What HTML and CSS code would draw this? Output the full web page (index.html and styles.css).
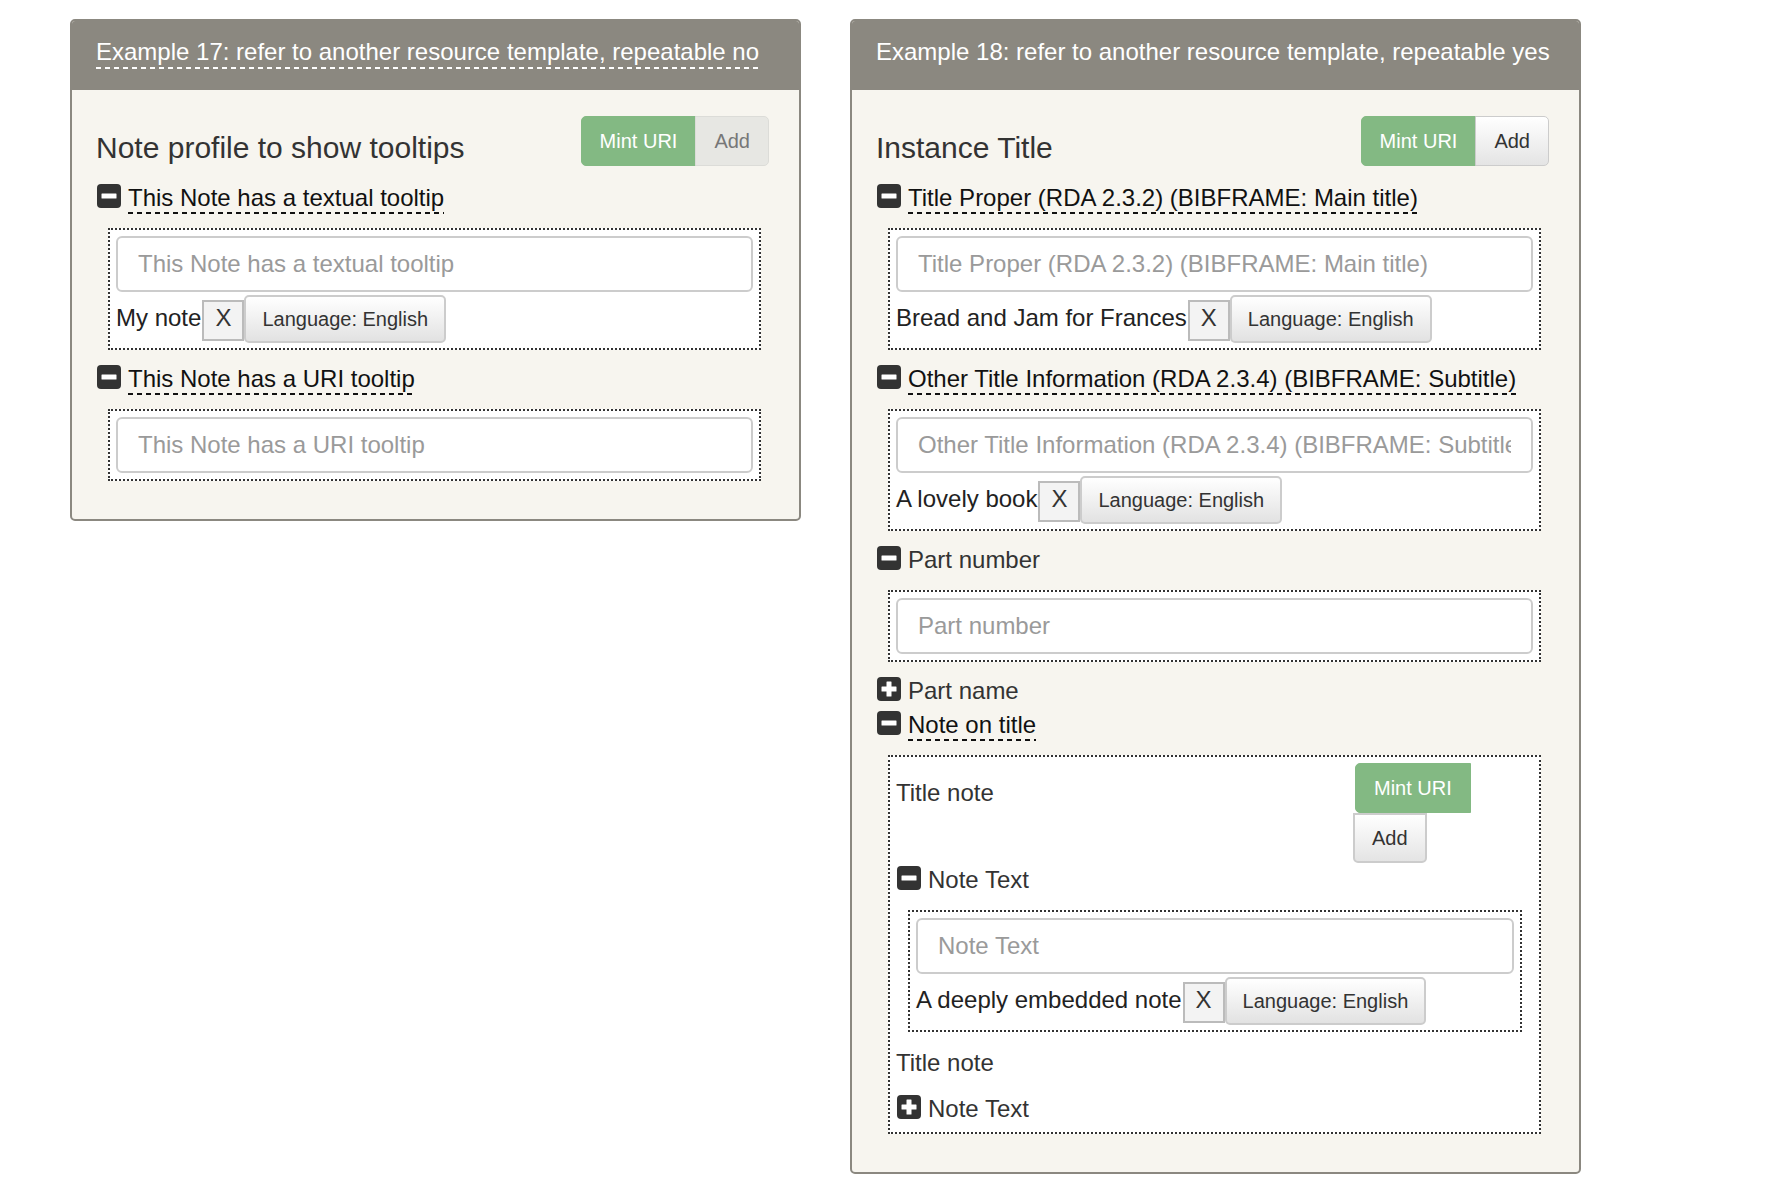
FILE: index.html
```html
<!DOCTYPE html>
<html lang="en">
<head>
<meta charset="utf-8">
<title>Resource templates</title>
<link rel="stylesheet" href="styles.css">
</head>
<body>
<div class="page">

  <section class="panel">
    <div class="panel-head"><span class="head-text tip tip-light">Example 17: refer to another resource template, repeatable no</span></div>
    <div class="panel-body">
      <div class="res-head">
        <h3 class="res-title">Note profile to show tooltips</h3>
        <div class="btn-group">
          <button type="button" class="btn btn-mint">Mint URI</button>
          <button type="button" class="btn btn-add btn-add--muted">Add</button>
        </div>
      </div>

      <div class="field">
        <div class="field-label">
          <svg class="toggle" viewBox="0 0 24 24" width="24" height="24"><rect width="24" height="24" rx="4" fill="#333"/><rect x="4.5" y="9.5" width="15" height="5" rx="0.5" fill="#fff"/></svg>
          <span class="label-text tip">This Note has a textual tooltip</span>
        </div>
        <div class="field-box">
          <input class="lit-input" type="text" placeholder="This Note has a textual tooltip">
          <div class="lit-row">
            <span class="lit-value">My note</span><button type="button" class="lit-remove">X</button><button type="button" class="lit-lang">Language: English</button>
          </div>
        </div>
      </div>

      <div class="field">
        <div class="field-label">
          <svg class="toggle" viewBox="0 0 24 24" width="24" height="24"><rect width="24" height="24" rx="4" fill="#333"/><rect x="4.5" y="9.5" width="15" height="5" rx="0.5" fill="#fff"/></svg>
          <span class="label-text tip">This Note has a URI tooltip</span>
        </div>
        <div class="field-box">
          <input class="lit-input" type="text" placeholder="This Note has a URI tooltip">
        </div>
      </div>
    </div>
  </section>

  <section class="panel">
    <div class="panel-head"><span class="head-text">Example 18: refer to another resource template, repeatable yes</span></div>
    <div class="panel-body">
      <div class="res-head">
        <h3 class="res-title">Instance Title</h3>
        <div class="btn-group">
          <button type="button" class="btn btn-mint">Mint URI</button>
          <button type="button" class="btn btn-add">Add</button>
        </div>
      </div>

      <div class="field">
        <div class="field-label">
          <svg class="toggle" viewBox="0 0 24 24" width="24" height="24"><rect width="24" height="24" rx="4" fill="#333"/><rect x="4.5" y="9.5" width="15" height="5" rx="0.5" fill="#fff"/></svg>
          <span class="label-text tip">Title Proper (RDA 2.3.2) (BIBFRAME: Main title)</span>
        </div>
        <div class="field-box">
          <input class="lit-input" type="text" placeholder="Title Proper (RDA 2.3.2) (BIBFRAME: Main title)">
          <div class="lit-row">
            <span class="lit-value">Bread and Jam for Frances</span><button type="button" class="lit-remove">X</button><button type="button" class="lit-lang">Language: English</button>
          </div>
        </div>
      </div>

      <div class="field">
        <div class="field-label">
          <svg class="toggle" viewBox="0 0 24 24" width="24" height="24"><rect width="24" height="24" rx="4" fill="#333"/><rect x="4.5" y="9.5" width="15" height="5" rx="0.5" fill="#fff"/></svg>
          <span class="label-text tip">Other Title Information (RDA 2.3.4) (BIBFRAME: Subtitle)</span>
        </div>
        <div class="field-box">
          <input class="lit-input" type="text" placeholder="Other Title Information (RDA 2.3.4) (BIBFRAME: Subtitle)">
          <div class="lit-row">
            <span class="lit-value">A lovely book</span><button type="button" class="lit-remove">X</button><button type="button" class="lit-lang">Language: English</button>
          </div>
        </div>
      </div>

      <div class="field">
        <div class="field-label">
          <svg class="toggle" viewBox="0 0 24 24" width="24" height="24"><rect width="24" height="24" rx="4" fill="#333"/><rect x="4.5" y="9.5" width="15" height="5" rx="0.5" fill="#fff"/></svg>
          <span class="label-text">Part number</span>
        </div>
        <div class="field-box">
          <input class="lit-input" type="text" placeholder="Part number">
        </div>
      </div>

      <div class="field">
        <div class="field-label">
          <svg class="toggle" viewBox="0 0 24 24" width="24" height="24"><rect width="24" height="24" rx="4" fill="#333"/><rect x="4.5" y="9.5" width="15" height="5" rx="0.5" fill="#fff"/><rect x="9.5" y="4.5" width="5" height="15" rx="0.5" fill="#fff"/></svg>
          <span class="label-text">Part name</span>
        </div>
      </div>

      <div class="field">
        <div class="field-label">
          <svg class="toggle" viewBox="0 0 24 24" width="24" height="24"><rect width="24" height="24" rx="4" fill="#333"/><rect x="4.5" y="9.5" width="15" height="5" rx="0.5" fill="#fff"/></svg>
          <span class="label-text tip">Note on title</span>
        </div>
        <div class="field-box field-box--nested">
          <div class="sub-res">
            <div class="sub-head">
              <span class="sub-title">Title note</span>
              <div class="btn-stack">
                <button type="button" class="btn btn-mint btn-mint--stack">Mint URI</button>
                <button type="button" class="btn btn-add btn-add--stack">Add</button>
              </div>
            </div>
            <div class="field">
              <div class="field-label">
                <svg class="toggle" viewBox="0 0 24 24" width="24" height="24"><rect width="24" height="24" rx="4" fill="#333"/><rect x="4.5" y="9.5" width="15" height="5" rx="0.5" fill="#fff"/></svg>
                <span class="label-text">Note Text</span>
              </div>
              <div class="field-box field-box--inner">
                <input class="lit-input" type="text" placeholder="Note Text">
                <div class="lit-row">
                  <span class="lit-value">A deeply embedded note</span><button type="button" class="lit-remove">X</button><button type="button" class="lit-lang">Language: English</button>
                </div>
              </div>
            </div>
          </div>
          <div class="sub-res">
            <div class="sub-head sub-head--plain">
              <span class="sub-title">Title note</span>
            </div>
            <div class="field">
              <div class="field-label">
                <svg class="toggle" viewBox="0 0 24 24" width="24" height="24"><rect width="24" height="24" rx="4" fill="#333"/><rect x="4.5" y="9.5" width="15" height="5" rx="0.5" fill="#fff"/><rect x="9.5" y="4.5" width="5" height="15" rx="0.5" fill="#fff"/></svg>
                <span class="label-text">Note Text</span>
              </div>
            </div>
          </div>
        </div>
      </div>
    </div>
  </section>

</div>
</body>
</html>
```

FILE: styles.css
```css
* {
  box-sizing: border-box;
}

html, body {
  margin: 0;
  padding: 0;
  background: #ffffff;
}

body {
  font-family: "Liberation Sans", Arial, sans-serif;
  color: #333;
}

.page {
  display: flex;
  align-items: flex-start;
  gap: 49px;
  padding: 19px 0 0 70px;
}

.panel {
  width: 731px;
  flex: none;
  border: 2px solid #8b8880;
  border-radius: 5px;
  background: #f7f5ef;
  overflow: hidden;
}

.panel-head {
  height: 69px;
  background: #8b8880;
  color: #fff;
  padding: 0 24px;
}

.head-text {
  display: inline-block;
  margin-top: 17px;
  font-size: 24px;
  line-height: 28px;
  padding-bottom: 3px;
  white-space: nowrap;
}

.tip {
  background-image: linear-gradient(to right, #111 0, #111 5px, transparent 5px);
  background-size: 9px 2px;
  background-repeat: repeat-x;
  background-position: 0 100%;
}

.tip-light {
  background-image: linear-gradient(to right, #ffffff 0, #ffffff 5px, transparent 5px);
}

.panel-body {
  padding: 26px 30px 28px 24px;
}

.res-head {
  display: flex;
  align-items: flex-end;
  justify-content: space-between;
  margin-bottom: 13px;
}

.res-title {
  margin: 0;
  font-size: 30px;
  line-height: 36px;
  font-weight: normal;
  color: #333;
}

.btn-group {
  display: flex;
}

.btn {
  font-family: "Liberation Sans", Arial, sans-serif;
  font-size: 20px;
  line-height: 24px;
  padding: 12px 18px;
  margin: 0;
  cursor: pointer;
}

.btn-mint {
  background: #83b983;
  border: 1px solid #83b983;
  color: #fff;
  border-radius: 5px 0 0 5px;
}

.btn-add {
  background: linear-gradient(#ffffff, #e4e4e4);
  border: 1px solid #cccccc;
  color: #333;
  border-radius: 0 5px 5px 0;
  margin-left: -1px;
}

.btn-add--muted {
  background: #e7e7e3;
  border-color: #dcdcd8;
  color: #777;
}

.field-label {
  display: flex;
  align-items: flex-start;
  height: 34px;
}

.toggle {
  flex: none;
  display: block;
  margin: 5px 7px 0 1px;
}

.label-text {
  display: inline-block;
  margin-top: 5px;
  font-size: 24px;
  line-height: 28px;
  padding-bottom: 2px;
  color: #333;
  white-space: nowrap;
}

.label-text.tip {
  color: #111;
}

.field-box {
  margin: 15px 8px 10px 12px;
  border: 2px dotted #333;
  background: #fff;
  padding: 6px;
}

.field-box--nested {
  padding-bottom: 8px;
}

.field-box--inner {
  margin-right: 11px;
}

.lit-input {
  display: block;
  width: 100%;
  height: 56px;
  border: 2px solid #cccccc;
  border-radius: 6px;
  padding: 0 20px;
  font-family: "Liberation Sans", Arial, sans-serif;
  font-size: 24px;
  color: #333;
  background: #fff;
  outline: none;
}

.lit-input::placeholder {
  color: #9a9a9a;
}

.lit-row {
  display: flex;
  align-items: baseline;
  margin-top: 3px;
  margin-bottom: -1px;
}

.lit-value {
  font-size: 24px;
  line-height: 28px;
  color: #222;
  margin-right: 1px;
  white-space: nowrap;
}

.lit-remove {
  font-family: "Liberation Sans", Arial, sans-serif;
  font-size: 24px;
  line-height: 27px;
  padding: 2px 11px 8px;
  margin: 0;
  border: 2px solid #bbbbbb;
  background: #f3f3f3;
  color: #333;
  border-radius: 0;
}

.lit-lang {
  font-family: "Liberation Sans", Arial, sans-serif;
  font-size: 20px;
  line-height: 24px;
  padding: 10px 16px;
  margin: 0;
  border: 2px solid #cccccc;
  border-radius: 5px;
  background: linear-gradient(#ffffff, #e2e2e2);
  color: #333;
}

.sub-head {
  display: flex;
  align-items: flex-start;
  margin-bottom: -2px;
}

.sub-head--plain {
  height: 48px;
  margin: 0;
  padding-top: 7px;
}

.sub-title {
  font-size: 24px;
  line-height: 28px;
  color: #333;
  margin-top: 16px;
}

.sub-head--plain .sub-title {
  margin-top: 0;
}

.btn-stack {
  margin-left: auto;
  margin-right: 62px;
  width: 118px;
  display: flex;
  flex-direction: column;
  align-items: flex-start;
}

.btn-mint--stack {
  margin-left: 2px;
}

.btn-add--stack {
  margin-left: 0;
  border-width: 2px;
  padding: 11px 17px;
  border-radius: 0 0 5px 5px;
}
```
